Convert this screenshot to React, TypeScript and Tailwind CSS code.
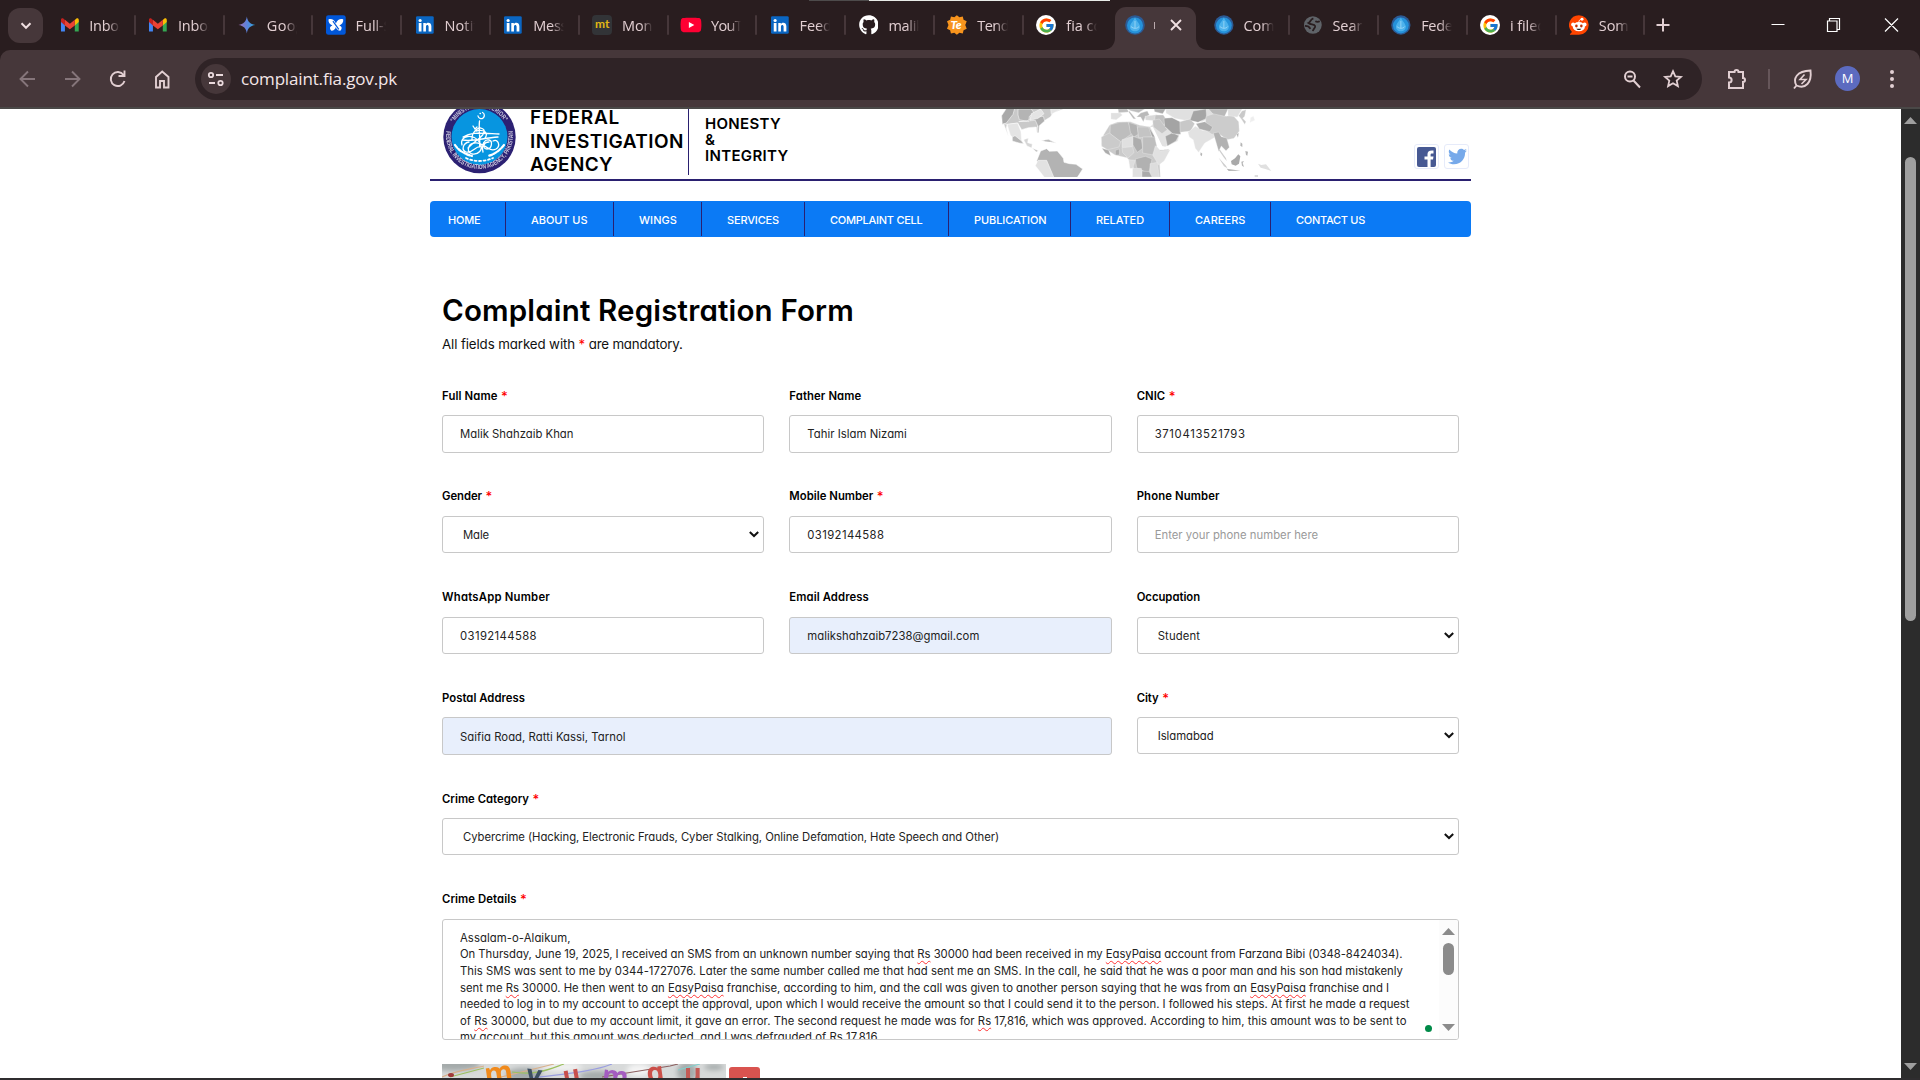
import { useLayoutEffect, useRef, type ReactNode } from "react";
import { FcGoogle } from "react-icons/fc";
import { FaGithub, FaYoutube, FaTwitter } from "react-icons/fa";

/* Tracks its text out (or in) so that the run is exactly `w` pixels wide. */
function Fit({ w, className = "", children }: { w: number; className?: string; children: ReactNode }) {
  const ref = useRef<HTMLSpanElement>(null);
  useLayoutEffect(() => {
    const el = ref.current;
    if (!el) return;
    el.style.letterSpacing = "0px";
    const n = Math.max(1, (el.textContent ?? "").length);
    el.style.letterSpacing = `${(w - el.getBoundingClientRect().width) / n}px`;
  }, [w]);
  return (
    <span ref={ref} className={`inline-block whitespace-pre ${className}`}>
      {children}
    </span>
  );
}

const Gmail = () => (
  <svg viewBox="0 0 20 20" className="h-5 w-5">
    <path d="M1 5v11.5h4V8.2z" fill="#4285f4" />
    <path d="M19 5v11.5h-4V8.2z" fill="#34a853" />
    <path d="M1 4.6V7l4 3.4V5L3.6 3.6C2.4 2.7 1 3.3 1 4.6z" fill="#c5221f" />
    <path d="M19 4.6V7l-4 3.4V5l1.4-1.4C17.6 2.7 19 3.3 19 4.6z" fill="#fbbc04" />
    <path d="M5 4.8l5 4 5-4v5.600l-5 4-5-4z" fill="#ea4335" />
  </svg>
);
const Gemini = () => (
  <svg viewBox="0 0 20 20" className="h-5 w-5">
    <defs>
      <linearGradient id="gem" x1="0" x2="1">
        <stop offset="0" stopColor="#a06bb0" />
        <stop offset=".5" stopColor="#5d83dc" />
        <stop offset="1" stopColor="#2aa5dd" />
      </linearGradient>
    </defs>
    <path d="M10 1.500C10.700 6.500 13.300 9.300 18.500 10 13.300 10.700 10.700 13.500 10 18.500 9.300 13.500 6.700 10.700 1.500 10 6.700 9.300 9.300 6.500 10 1.500z" fill="url(#gem)" />
  </svg>
);
const Butterfly = () => (
  <svg viewBox="0 0 20 20" className="h-5 w-5">
    <rect width="20" height="20" rx="2.500" fill="#0057d9" />
    <path d="M2.500 4.500C5 3.200 8.500 4.500 10 8.500 11.500 4.500 15 3.200 17.500 4.500 17.800 7.500 16 9.800 13.500 10.500 16.500 11.500 16.500 14 14.500 15.800 12 15.800 10.500 14 10 12 9.500 14 8 15.800 5.500 15.800 3.500 14 3.500 11.500 6.500 10.500 4 9.800 2.200 7.500 2.500 4.500z" fill="#fff" />
    <path d="M7 6l6 8.500" stroke="#0057d9" strokeWidth="1.200" />
  </svg>
);
const LinkedIn = () => (
  <svg viewBox="0 0 20 20" className="h-5 w-5">
    <rect x="1" y="1" width="18" height="18" rx="1.500" fill="#0a66c2" />
    <circle cx="5.200" cy="5.400" r="1.600" fill="#fff" />
    <path d="M3.800 8h2.800v8.500H3.800zM8.400 8h2.600v1.200c1.500-2.300 5.600-1.800 5.600 2.100v5.200h-2.800v-4.700c0-2.300-2.700-2.200-2.700 0v4.700H8.400z" fill="#fff" />
  </svg>
);
const Monkey = () => (
  <span className="flex h-5 w-5 items-center justify-center rounded bg-[#323437] font-['Lato',sans-serif] text-[12px] leading-none font-bold text-[#e2b714]">
    <span className="-mt-0.5">mt</span>
  </span>
);
const YouTube = () => (
  <span className="flex h-5 w-5 items-center justify-center">
    <FaYoutube className="h-[22px] w-[22px] shrink-0 text-[#ff0033] [background:linear-gradient(#fff,#fff)_center/8px_8px_no-repeat]" />
  </span>
);
const Github = () => <FaGithub className="h-5 w-5 text-white" />;
const Tender = () => (
  <svg viewBox="0 0 20 20" className="h-5 w-5">
    <path d="M10 0l2.600 2.200L16 1.500l.8 3.300L20 6.300 18.500 10l1.500 3.700-3.200 1.500-.8 3.300-3.400-.7L10 20l-2.600-2.200-3.400.7-.8-3.300L0 13.700 1.500 10 0 6.300l3.200-1.500L4 1.500l3.400.7z" fill="#f7941d" />
    <text x="3.500" y="14.500" fontSize="12" fontWeight="900" fontStyle="italic" fontFamily="Lato" fill="#fff">Te</text>
  </svg>
);
const Google = () => (
  <span className="flex h-5 w-5 items-center justify-center rounded-full bg-white">
    <FcGoogle className="h-[17px] w-[17px]" />
  </span>
);
const Drop = () => (
  <svg viewBox="0 0 20 20" className="h-5 w-5">
    <circle cx="10" cy="10" r="9.800" fill="#2c5a94" />
    <circle cx="10" cy="10.500" r="8" fill="#2592da" />
    <path d="M10 2.500c.6 2.500 3.800 4.800 4.800 8 1 4-2 5.800-4.800 5.800s-5.800-1.800-4.800-5.800c1-3.200 4.200-5.500 4.800-8z" fill="#4db2ec" />
    <path d="M6 11.500c2.500 2.500 6 2.500 8 0M10 6v7" stroke="#a5dbf8" strokeWidth=".8" fill="none" />
  </svg>
);
const Globe = () => (
  <svg viewBox="0 0 20 20" className="h-5 w-5">
    <circle cx="10" cy="10" r="9" fill="#5f6368" />
    <path d="M10.500 3.200C7 4.500 8 7 5.500 8c2.500 2 6 .5 6.800 3 .6 2-2 2.600-2.300 5.300M2 11c2.500 0 4.500.8 5.500 3M12.500 6.200c1.500.8 3 .8 4.500 0" stroke="#291d1f" strokeWidth="1.800" fill="none" />
  </svg>
);
const Reddit = () => (
  <svg viewBox="0 0 20 20" className="h-5 w-5">
    <path d="M10 0a10 10 0 1 1 0 20H1.500c-.6 0-.8-.5-.4-.9L3 17.100A10 10 0 0 1 10 0z" fill="#ff4500" />
    <circle cx="4.200" cy="9.500" r="2" fill="#fff" />
    <circle cx="15.800" cy="9.500" r="2" fill="#fff" />
    <ellipse cx="10" cy="11.700" rx="6.200" ry="4.700" fill="#fff" />
    <circle cx="13.200" cy="4.200" r="1.500" fill="#fff" />
    <path d="M10 7.200c0-1.800 1-2.800 2.500-2.900" stroke="#fff" strokeWidth=".9" fill="none" />
    <ellipse cx="7.500" cy="11" rx="1.300" ry="1.500" fill="#c22d00" />
    <ellipse cx="12.500" cy="11" rx="1.300" ry="1.500" fill="#c22d00" />
    <path d="M7.500 13.800h5c-.8 1.800-4.200 1.800-5 0z" fill="#222" />
  </svg>
);

type TabData = { icon: () => ReactNode; text: string; w: number; active?: boolean };
const tabs: TabData[] = [
  { icon: Gmail, text: "Inbox", w: 37 },
  { icon: Gmail, text: "Inbox", w: 37 },
  { icon: Gemini, text: "Goog", w: 37 },
  { icon: Butterfly, text: "Full-S", w: 36 },
  { icon: LinkedIn, text: "Notifi", w: 38 },
  { icon: LinkedIn, text: "Mess", w: 34 },
  { icon: Monkey, text: "Monk", w: 38 },
  { icon: YouTube, text: "YouTu", w: 39 },
  { icon: LinkedIn, text: "Feed", w: 32 },
  { icon: Github, text: "malik", w: 35 },
  { icon: Tender, text: "Tend", w: 32 },
  { icon: Google, text: "fia co", w: 36 },
  { icon: Drop, text: "", w: 0, active: true },
  { icon: Drop, text: "Com", w: 31 },
  { icon: Globe, text: "Searc", w: 37 },
  { icon: Drop, text: "Feder", w: 37 },
  { icon: Google, text: "i filed", w: 36 },
  { icon: Reddit, text: "Som", w: 30 },
];

function Tab({ t, beforeActive }: { t: TabData; beforeActive: boolean }) {
  const Icon = t.icon;
  if (t.active) {
    return (
      <div className="relative h-[43px] w-[88.800px] shrink-0">
        <div className="relative ml-[2.500px] flex h-[43px] w-[81px] items-center rounded-t-[11px] bg-[#46373a] pb-[7px] pl-[10px]">
          <svg className="absolute bottom-0 -left-3" width="12" height="12"><path d="M12 0v12H0C7 12 12 7 12 0z" fill="#46373a" /></svg>
          <svg className="absolute -right-3 bottom-0" width="12" height="12"><path d="M0 0v12h12C5 12 0 7 0 0z" fill="#46373a" /></svg>
          <Icon />
          <span className="ml-[9px] h-[7px] w-px bg-[#b9a9ac]" />
          <svg viewBox="0 0 12 12" className="ml-[15px] h-3 w-3" stroke="#f0dfe1" strokeWidth="1.900"><path d="M1 1l10 10M11 1L1 11" /></svg>
        </div>
      </div>
    );
  }
  return (
    <div className="flex h-[36px] w-[88.800px] shrink-0 items-center pl-[12.500px]">
      <Icon />
      <div className="ml-[10px] w-[31px] overflow-hidden pt-[2px] text-[14.500px] leading-5 text-[#e2cfd2] [mask-image:linear-gradient(90deg,#000_60%,transparent)]">
        <Fit w={t.w}>{t.text}</Fit>
      </div>
      {!beforeActive && <span className="ml-[14px] h-5 w-[2px] shrink-0 rounded bg-[#46373a]" />}
    </div>
  );
}

function Chrome() {
  return (
    <header className="h-[109px] bg-[#291d1f] font-['Open_Sans',sans-serif]">
      <div className="flex h-px pl-[809px]"><span className="w-[60px] bg-[#4d4b4b]" /><span className="w-[241px] bg-[#e8ece8]" /></div>
      <div className="flex h-[49px] pt-[6px]">
        <div className="mt-px ml-2 flex h-[35px] w-[35px] items-center justify-center rounded-[12px] bg-[#46373a]">
          <svg width="12" height="8" viewBox="0 0 12 8" fill="none" stroke="#f0dfe1" strokeWidth="2"><path d="M1.500 1.200L6 5.800l4.500-4.600" /></svg>
        </div>
        <div className="flex w-[1604px] shrink-0 pl-[4px]">
          {tabs.map((t, i) => <Tab key={i} t={t} beforeActive={i === 11} />)}
        </div>
        <svg className="mt-[11px] ml-[9px]" width="14" height="14" stroke="#e2cfd2" strokeWidth="2"><path d="M7 .5v13M.5 7h13" /></svg>
        <svg className="mt-[10px] ml-[101px]" width="128" height="16" viewBox="0 0 128 16" fill="none" stroke="#fff" strokeWidth="1.200">
          <path d="M.5 7.500h13M58.500 4v-2.500h10v11h-2.500M56.500 4h9.500v10.500h-9.500zM114 1.500l13 13M127 1.500l-13 13" />
        </svg>
      </div>
      <div className="flex h-[57px] items-center rounded-t-[10px] bg-[#46373a]">
        <svg className="ml-[19px] shrink-0" width="152" height="24" viewBox="0 0 152 24" fill="none" strokeWidth="1.900">
          <g stroke="#85757a"><path d="M16 12H2M9 4.500L1.500 12 9 19.500M46 12h14.500M53 4.500l7.500 7.500-7.500 7.500" /></g>
          <g stroke="#e2cfd2"><path d="M104.500 8A7 7 0 1 0 105.500 14M105.500 3.500v5.500H99.500" /><path d="M137 10v10.500h4V14h4v6.500h4.500V10L143.200 4.500z" /></g>
        </svg>
        <div className="ml-[24px] flex h-[42px] w-[1507px] shrink-0 items-center rounded-full bg-[#2f2326]">
          <span className="ml-[6px] flex h-[30px] w-[30px] items-center justify-center rounded-full bg-[#46373a]">
            <svg width="18" height="16" fill="none" stroke="#eadadd" strokeWidth="1.800"><circle cx="4" cy="4" r="2.200" /><path d="M9 4h7M2 12h6" /><circle cx="13.500" cy="12" r="2.200" /></svg>
          </span>
          <Fit w={156} className="mt-px ml-[10px] text-[17px] leading-6 text-[#f4e6e8]">complaint.fia.gov.pk</Fit>
          <svg className="ml-auto" width="20" height="20" fill="none" stroke="#e2cfd2" strokeWidth="2"><circle cx="8" cy="7.500" r="5" /><path d="M11.500 11.500l6.500 7M5.500 7.500h5" /></svg>
          <svg className="mr-[18px] ml-[20px]" width="22" height="22" viewBox="0 0 22 22" fill="none" stroke="#e2cfd2" strokeWidth="1.800"><path d="M11 3.200l2.300 5.200 5.600.5-4.200 3.700 1.200 5.500L11 15.200l-4.900 2.900 1.200-5.500-4.200-3.700 5.600-.5z" /></svg>
        </div>
        <svg className="ml-[23px]" width="24" height="24" viewBox="0 0 24 24" fill="none" stroke="#e2cfd2" strokeWidth="2"><path d="M4 5h5.500a2 2 0 0 1 4 0H18v6a2 2 0 0 1 0 4v6H4v-5.500c3.500 0 3.500-5 0-5z" /></svg>
        <span className="ml-[19px] h-5 w-[2px] bg-[#66565a]" />
        <svg className="ml-[21px]" width="24" height="24" viewBox="0 0 24 24" fill="none" stroke="#e2cfd2" strokeWidth="1.900"><path d="M5.500 18.500C1.500 12 5.500 4 19.500 3.500c1.500 12-5 19-14 15zm0 0L3 21.500" /><path d="M13.500 7.500L9 12.500h6l-4.500 4.500" strokeWidth="1.600" /></svg>
        <span className="ml-[20px] flex h-[25px] w-[25px] items-center justify-center rounded-full bg-[#5c6bc0] text-[13px] text-white">M</span>
        <svg className="ml-[29px]" width="6" height="20" fill="#e2cfd2"><circle cx="3" cy="3" r="2" /><circle cx="3" cy="10" r="2" /><circle cx="3" cy="17" r="2" /></svg>
      </div>
      <div className="h-[2px] bg-[#4a4847]" />
    </header>
  );
}

function Emblem() {
  return (
    <svg className="ml-[13px] h-[72px] w-[73px] shrink-0" viewBox="0 8 73 72">
      <defs>
        <path id="over" d="M10.800 21.500a29.500 29.500 0 0 1 51.400 0" />
        <path id="ring" d="M3.300 30a33.500 33.500 0 1 0 66.400 0" />
      </defs>
      <circle cx="36.500" cy="36" r="36.200" fill="#2c2173" />
      <circle cx="36.500" cy="36" r="28" fill="#0795e0" />
      <g fontFamily="Liberation Sans" fontWeight="700" fill="#fff" opacity=".75">
        <text fontSize="6.500"><textPath href="#over" textLength="61" lengthAdjust="spacingAndGlyphs">"MINISTRY OF INTERIOR"</textPath></text>
        <text fontSize="6.500"><textPath href="#ring" textLength="114" lengthAdjust="spacingAndGlyphs">FEDERAL INVESTIGATION AGENCY, PAKISTAN</textPath></text>
      </g>
      <g fill="none" stroke="#fff" strokeWidth="1.300" strokeLinecap="round">
        <path d="M39.500 11.500a3.200 3.200 0 1 1-4.500 3.500M37 12.500h.5M30 25l2 3 2-2M36.500 20c-1 9 1 17 0 26M29 38c0-9 9-14 12-9 2 5-8 10-16 18M19 44c-3-10 12-12 18-2 4 7-2 12-8 11-6-2-4-10 2-11 10-2 14 10 22 6 5-3 2-11-3-8M20 36c8-5 14-4 36-3M20 39c9 2 20-2 35-3M46 41c-6 0-7 7-2 7s6-8 2-9-8 4-6 12M26 41c-6 1-8 8-3 10 7 2 10-8 16-5M33 30c8-2 13 2 9 7" />
        <path d="M12 44c4 6 10 9 17 11M61 44c-5 6-9 9-16 11" strokeDasharray="3.500 1.500" strokeWidth="2.200" />
        <path d="M23 57c8 4 18 4 27 0" strokeDasharray="2 2.500" strokeWidth="1.800" />
      </g>
    </svg>
  );
}

function WorldMap() {
  return (
    <svg className="h-[68px] w-[284px] shrink-0" viewBox="0 12 852 204">
      <g fill="#e4e4e4" stroke="#fff" strokeWidth="1.500">
        <path d="M38 0L17 32l2 26 16 0 30-4 12 20 20-6 24-2 2 18 4-2-2-20 18-14 20-12 8-12 36-14 6-10z" fill="#c9c9c9" />
        <path d="M38 0L17 32l2 26 12-4 20-26 8-28z" fill="#a9a9a9" />
        <path d="M66 12h40l8 12-14 10-2 16-28-6-4-14z" fill="#b4b4b4" />
        <path d="M68 50l50-4 8 18-2 18 4 2 2-22 16-14-4-14-30 4-20 10z" fill="#b0b0b0" />
        <path d="M106 26l28-14 10 14-18 14-24 6zM164 12h30l-28 16z" />
        <path d="M33 58l32-4 10 26 2 28-20-2-14-16z" />
        <path d="M33 58l-10-2 14 38-6-24z" fill="#ccc" />
        <path d="M49 96l8-4 20 16 6 8-14-2-20-6z" fill="#b5b5b5" />
        <path d="M83 104l14-5-2 14 14 4-2 12-14-6z" fill="#d6d6d6" />
        <path d="M109 129l18 8-6 4zM135 107l22-4 24 12-18-4zM183 122l3 8" fill="#bdbdbd" />
        <path d="M134 138l18-7 8 8 24-1 10 12 8 10 2 12 16 4 20 2 20 14-14 22-8 8h-72l-26-38-18-16z" fill="#b3b3b3" />
        <path d="M126 166h26l22 52h-28l-28-36z" fill="#e2e2e2" />
      </g>
      <g stroke="#f4f4f4" strokeWidth="1">
        <path d="M345 24h28l6 6-18 14-16-2z" fill="#e0e0e0" />
        <path d="M366 12h28l4 9-30 2zM394 12h52l-18 11-24-6z" fill="#bdbdbd" />
        <path d="M400 18l20 24-8-1-14-20zM422 36l12-12 20-6 6 12-12 6-6 14-8-14z" fill="#b9b9b9" />
        <path d="M447 34l34-5 22 8-12 10-42-2z" fill="#d9d9d9" />
        <path d="M341 60l24-9 38-1 28 11 34 5 10 30 4 26 12 13 28-2-18 32-10 12 2 40h-82l4-20-8-24-14-15-36-8-24-16-16-16 6-29z" fill="#cacaca" />
        <path d="M343 60l28-8 25-1 4 10 6 26-32 23-32-24z" fill="#bdbdbd" />
        <path d="M316 96l24-12 34 26-5 16-34 8-18-10z" fill="#cbcbcb" />
        <path d="M398 52l25 8 4 28-14 8-10-14z" fill="#b3b3b3" />
        <path d="M424 66h36l8 30-40 2z" fill="#c4c4c4" /><path d="M458 66h12l14 36-16-6z" fill="#aaa" />
        <path d="M378 104l34-10 4 22-12 14-26-3z" fill="#e0e0e0" />
        <path d="M411 94l25 9 4 27-16 12-13-22z" fill="#adadad" />
        <path d="M440 96h36l6 26-10 28-32-6z" fill="#bebebe" />
        <path d="M378 128l32-3 4 18-18 16-16-16z" fill="#d2d2d2" />
        <path d="M478 122l14 16 30-3-18 33-16 12-18-30z" fill="#e1e1e1" />
        <path d="M418 162l30-8 20 8-10 44-36-18z" fill="#b1b1b1" />
        <path d="M462 176l22-4 6 44h-28zM398 164l20 2-8 24h-8z" fill="#ddd" />
        <path d="M410 190h26l6 26h-32z" fill="#e0e0e0" /><path d="M438 198l22 2 8 16h-30z" fill="#aaa" />
        <path d="M318 130l20 6 6 16-16-8zM358 136l12-4v18h-12z" fill="#acacac" />
        <path d="M460 68l20-20 30-4 42 36-7 28-38 17-12-1z" fill="#e2e2e2" />
        <path d="M478 30h24l10 16-8 14-20 2-8-16z" fill="#c2c2c2" />
        <path d="M470 46l20-4 24 32-16 12-26-20z" fill="#c7c7c7" />
        <path d="M508 94l22-11 18 9-8 16-26 15z" fill="#a6a6a6" />
      </g>
      <path d="M463 66l8 0 28 58 8 2-4 8-10-1zM518 70l4-3 16 16-8 4z" fill="#fff" />
      <g stroke="#f4f4f4" strokeWidth="1">
        <path d="M474 12h35l-9 14-24-6z" fill="#aaa" />
        <path d="M510 12h132l10 20-34 18-26-10-24 6-32-6-26-16z" fill="#e0e0e0" />
        <path d="M504 40l24-2 24 12 2 38-24-2-24-22z" fill="#a4a4a4" />
        <path d="M552 50l30-8 14 14-12 22-32 4z" fill="#c8c8c8" />
        <path d="M592 18l38-6 2 28-26 12-24-6z" fill="#a5a5a5" />
        <path d="M576 82l22-18 20 12 46 6-10 16-28 16-12 18-6 10-10-12-6-26-12-8z" fill="#e2e2e2" />
        <path d="M630 34l30-10 30 10 20-4 18 20 2 28-16 22-22 4-18-14-26-2-22-14z" fill="#ccc" />
        <path d="M600 56l26-6 24 16-8 14-32-8z" fill="#adadad" />
        <path d="M638 12h58l-10 22-36-8z" fill="#b9b9b9" /><path d="M696 12h42l-14 24-28-4z" fill="#dfdfdf" />
        <path d="M652 84l16-3 8 14 16 4 8 28-10 10-14-14-8 16-8-28z" fill="#b2b2b2" />
        <path d="M728 32l10-14 12-4-4 20-6 6 10 10-4 8-10-16z" fill="#c9c9c9" />
        <path d="M764 38l8-4 4 12-14 6z" fill="#eee" />
      </g>
      <g>
        <path d="M666 132l6 2 18 26 2 8-8-10zM668 158l22 24 4 8-10-6z" fill="#cfcfcf" />
        <path d="M705 168l12-8 10-12 6 6-4 22-10 6-12-4z" fill="#a9a9a9" />
        <path d="M614 142l5 4-2 8-4-4zM734 112l5 4 0 10-6-4zM748 138l8 2-2 12-4-2zM736 170l8-2-4 6 4 12-6-4zM692 191l26 4 16 2-36 1zM722 88l6-4-2 14z" fill="#b5b5b5" />
        <path d="M786 176l10 4 14-2 16 20-18-6-14-4z" fill="#e0e0e0" />
        <path d="M776 213h10M146 107l16 2" stroke="#bbb" strokeWidth="3" />
      </g>
    </svg>
  );
}

const nav: [string, number, string][] = [
  ["HOME", 32.5, "w-[76px] pl-[18px]"],
  ["ABOUT US", 56.5, "w-[108px] pl-[25px]"],
  ["WINGS", 38, "w-[88px] pl-[25px]"],
  ["SERVICES", 52, "w-[103px] pl-[25px]"],
  ["COMPLAINT CELL", 92.5, "w-[144px] pl-[25px]"],
  ["PUBLICATION", 72.5, "w-[122px] pl-[25px]"],
  ["RELATED", 48, "w-[99px] pl-[25px]"],
  ["CAREERS", 50.5, "w-[101px] pl-[25px]"],
  ["CONTACT US", 69, "w-[120px] pl-[25px]"],
];

type FieldProps = { label: string; lw: number; req?: boolean; value: string; vw: number; select?: boolean; fill?: boolean; muted?: boolean; tall?: boolean; low?: boolean; span?: string };

function Label({ label, lw, req }: { label: string; lw: number; req?: boolean }) {
  return (
    <div className="flex h-4 gap-[3.500px] text-[11.300px] leading-4 font-semibold text-black">
      <Fit w={lw}>{label}</Fit>
      {req && <span className="text-[13px] font-medium text-[#f00]">*</span>}
    </div>
  );
}

function Field({ label, lw, req, value, vw, select, fill, muted, tall, low, span = "" }: FieldProps) {
  return (
    <div className={`h-[100.750px] ${span}`}>
      <Label label={label} lw={lw} req={req} />
      <div
        className={`mt-[11.500px] flex items-center justify-between rounded-[3px] border border-[#c8c8c8] pr-[4px] ${tall ? "h-[38px]" : "h-[37px]"} ${select ? "pl-5" : "pl-[17px]"} ${fill ? "bg-[#e8effc]" : "bg-white"}`}
      >
        <Fit w={vw} className={`text-[11.300px] leading-4 ${low ? "mt-[2px]" : ""} ${muted ? "text-[#9a9a9a]" : "text-[#222]"}`}>{value}</Fit>
        {select && (
          <svg width="10" height="7" viewBox="0 0 10 7" fill="none" stroke="#111" strokeWidth="2"><path d="M.8 1l4.200 4L9.200 1" /></svg>
        )}
      </div>
    </div>
  );
}

/* Text in square brackets gets the spell checker's underline. */
const details: [string, number][] = [
  ["Assalam-o-Alaikum,", 110.5],
  ["On Thursday, June 19, 2025, I received an SMS from an unknown number saying that [Rs] 30000 had been received in my [EasyPaisa] account from Farzana Bibi (0348-8424034).", 942.5],
  ["This SMS was sent to me by 0344-1727076. Later the same number called me that had sent me an SMS. In the call, he said that he was a poor man and his son had mistakenly", 943],
  ["sent me [Rs] 30000. He then went to an [EasyPaisa] franchise, according to him, and the call was given to another person saying that he was from an [EasyPaisa] franchise and I", 929],
  ["needed to log in to my account to accept the approval, upon which I would receive the amount so that I could send it to the person. I followed his steps. At first he made a request", 949.5],
  ["of [Rs] 30000, but due to my account limit, it gave an error. The second request he made was for [Rs] 17,816, which was approved. According to him, this amount was to be sent to", 946.5],
  ["my account, but this amount was deducted, and I was defrauded of Rs 17,816.", 420.5],
];

function Page() {
  return (
    <main className="h-[969px] w-[1901px] overflow-hidden bg-white pl-[430px] font-['Inter','Open_Sans',sans-serif] text-black [font-feature-settings:'cv11']">
      <div className="w-[1041px]">
        <div className="flex h-[72px] border-b-2 border-[#2a2070]">
          <Emblem />
          <div className="-mt-[3px] ml-[14px] flex w-[157.500px] flex-col text-[19px] leading-[23.500px] font-semibold">
            <Fit w={90} className="self-start">FEDERAL</Fit>
            <Fit w={154} className="self-start">INVESTIGATION</Fit>
            <Fit w={83} className="self-start">AGENCY</Fit>
          </div>
          <div className="h-[66px] w-px bg-[#2a2070]" />
          <div className="mt-[6.500px] ml-[16.500px] flex w-[90.500px] flex-col text-[15px] leading-4 font-semibold">
            <Fit w={76} className="self-start">HONESTY</Fit>
            <Fit w={11.5} className="self-start">&amp;</Fit>
            <Fit w={83.5} className="self-start">INTEGRITY</Fit>
          </div>
          <div className="ml-[200px]"><WorldMap /></div>
          <div className="mt-[35px] ml-auto flex gap-[5px] pr-[2px]">
            <span className="flex h-[25px] w-[25px] items-center justify-center rounded-[3px] border border-[#e6ebfa]">
              <svg width="19" height="20"><rect width="19" height="20" rx="2" fill="#475993" /><path d="M10.500 20v-7.500H7.500V9.500h3V7.300C10.500 4.500 12 3.200 16.500 3.600v2.900c-2.400-.2-2.900.2-2.900 1.400v1.600h2.900l-.5 3h-2.400V20z" fill="#fff" /></svg>
            </span>
            <span className="flex h-[25px] w-[25px] items-center justify-center rounded-[3px] border border-[#e6ebfa] pl-[2px]">
              <FaTwitter className="h-[19px] w-[19px] text-[#76a9ea]" />
            </span>
          </div>
        </div>

        <nav className="mt-5 flex h-9 overflow-hidden rounded-[4px] bg-[#0b7af5] py-px text-[11px] font-medium text-white">
          {nav.map(([t, w, c], i) => (
            <div key={t} className={`flex h-[34px] shrink-0 items-center pt-[2px] ${c} ${i < nav.length - 1 ? "border-r border-[#2a2070]" : ""}`}>
              <Fit w={w}>{t}</Fit>
            </div>
          ))}
        </nav>

        <div className="pr-3 pl-3">
          <h1 className="mt-[53px] h-10 text-[29.500px] leading-10 font-semibold"><Fit w={412}>Complaint Registration Form</Fit></h1>
          <p className="mt-1 flex h-5 gap-[3.500px] text-[13.300px] leading-5 text-[#111]">
            <Fit w={133}>All fields marked with</Fit>
            <span className="text-[#f00]">*</span>
            <Fit w={94}>are mandatory.</Fit>
          </p>

          <div className="mt-[33.500px] grid grid-cols-3 gap-x-[25px]">
            <Field label="Full Name" lw={55.500} req value="Malik Shahzaib Khan" vw={113.500} tall />
            <Field label="Father Name" lw={72} value="Tahir Islam Nizami" vw={99.500} tall />
            <Field label="CNIC" lw={28.500} req value="3710413521793" vw={91} tall />
            <Field label="Gender" lw={40} req value="Male" vw={26} select low />
            <Field label="Mobile Number" lw={84} req value="03192144588" vw={77} low />
            <Field label="Phone Number" lw={83} value="Enter your phone number here" vw={163.500} muted low />
            <Field label="WhatsApp Number" lw={108} value="03192144588" vw={77} low />
            <Field label="Email Address" lw={79.500} value="malikshahzaib7238@gmail.com" vw={172} fill low />
            <Field label="Occupation" lw={63.500} value="Student" vw={42.500} select low />
            <Field label="Postal Address" lw={83} value="Saifia Road, Ratti Kassi, Tarnol" vw={165.500} fill tall low span="col-span-2" />
            <Field label="City" lw={22} req value="Islamabad" vw={56} select />
            <Field label="Crime Category" lw={87} req value="Cybercrime (Hacking, Electronic Frauds, Cyber Stalking, Online Defamation, Hate Speech and Other)" vw={536} select span="col-span-3" />
          </div>

          <Label label="Crime Details" lw={74.500} req />
          <div className="relative mt-[11.500px] flex h-[121px] justify-between overflow-hidden rounded-[3px] border border-[#c8c8c8] pl-[17px]">
            <div className="h-[119px] overflow-hidden pt-[10px] text-[11.300px] leading-[16.600px] text-[#222]">
              {details.map(([line, w]) => (
                <div key={line} className="h-[16.600px]">
                  <Fit w={w}>
                    {line.split(/[[\]]/).map((part, i) =>
                      i % 2 ? (
                        <span key={i} className="underline decoration-[#f33] decoration-wavy decoration-1 underline-offset-[2px] [text-decoration-skip-ink:none]">{part}</span>
                      ) : (
                        part
                      ),
                    )}
                  </Fit>
                </div>
              ))}
            </div>
            <span className="absolute right-[26px] bottom-[7px] h-[7px] w-[7px] rounded-full bg-[#008a48]" />
            <div className="flex w-[19px] flex-col items-center bg-[#fcfcfc] pt-2 pb-2">
              <svg width="13" height="7" fill="#8b8b8b"><path d="M6.500 0L13 7H0z" /></svg>
              <span className="mt-2 h-8 w-[11px] rounded-full bg-[#8b8b8b]" />
              <svg className="mt-auto" width="13" height="7" fill="#8b8b8b"><path d="M6.500 7L13 0H0z" /></svg>
            </div>
          </div>

          <div className="mt-6 flex items-start">
            <svg width="284" height="14" viewBox="0 0 284 14" className="shrink-0">
              <defs>
                <filter id="soft"><feGaussianBlur stdDeviation="2.500" /></filter>
                <filter id="soft2"><feGaussianBlur stdDeviation=".6" /></filter>
              </defs>
              <rect width="284" height="14" fill="#d8dada" />
              <g filter="url(#soft)" fill="#a4aaaa">
                <ellipse cx="12" cy="1" rx="26" ry="6" /><ellipse cx="82" cy="11" rx="18" ry="7" /><ellipse cx="155" cy="12" rx="18" ry="5" />
                <ellipse cx="245" cy="8" rx="10" ry="10" /><ellipse cx="272" cy="3" rx="10" ry="3" /><ellipse cx="120" cy="3" rx="20" ry="4" fill="#f2f2f2" /><ellipse cx="197" cy="6" rx="12" ry="6" fill="#f4f4f4" />
              </g>
              <g fill="none" strokeWidth="1.200" filter="url(#soft2)">
                <path d="M0 13C15 6 25 6 42 2M55 14L112 0" stroke="#d8b08c" /><path d="M70 8c25 4 40-4 52-8M8 13l34-9" stroke="#9cc060" />
                <path d="M90 14c30-4 60-6 80-14" stroke="#9a9ee0" /><path d="M160 13l68-11 8-2" stroke="#8c6060" /><path d="M236 6l18-5 4-1" stroke="#80d0cc" />
              </g>
              <g filter="url(#soft2)" fontFamily="Open Sans" fontWeight="700">
                <text x="43" y="19" fontSize="29" fill="#f08a1c" transform="rotate(-8 55 14)">m</text>
                <text x="84" y="20" fontSize="27" fill="#3c5064" transform="rotate(8 90 14)">v</text>
                <text x="121" y="21" fontSize="27" fill="#c8504c" transform="rotate(-10 128 14)">u</text>
                <text x="160" y="21" fontSize="27" fill="#a45cc0" transform="rotate(6 170 14)">m</text>
                <text x="205" y="18" fontSize="28" fill="#cc5048" transform="rotate(-8 215 14)">q</text>
                <text x="242" y="19" fontSize="27" fill="#c45a54">u</text>
              </g>
              <ellipse cx="9" cy="11" rx="3" ry="2" fill="#a03a3a" />
            </svg>
            <span className="mt-[3px] ml-[3px] flex h-8 w-[31px] justify-center rounded-[3px] bg-[#d9534f] pt-[10px]">
              <span className="h-2 w-1 bg-white" />
            </span>
          </div>
        </div>
      </div>
    </main>
  );
}

export default function App() {
  return (
    <div className="h-[1080px] w-[1920px] overflow-hidden bg-[#2f2d2f]">
      <Chrome />
      <div className="flex">
        <Page />
        <aside className="flex h-[969px] w-[19px] flex-col items-center bg-[#2c2c2c] pt-[8px] pr-[1px] pb-[8px]">
          <svg width="13" height="7" fill="#9f9f9f"><path d="M6.500 0L13 7H0z" /></svg>
          <span className="mt-[33px] h-[464px] w-[11px] rounded-full bg-[#9f9f9f]" />
          <svg className="mt-auto" width="13" height="7" fill="#9f9f9f"><path d="M6.500 7L13 0H0z" /></svg>
        </aside>
      </div>
    </div>
  );
}
